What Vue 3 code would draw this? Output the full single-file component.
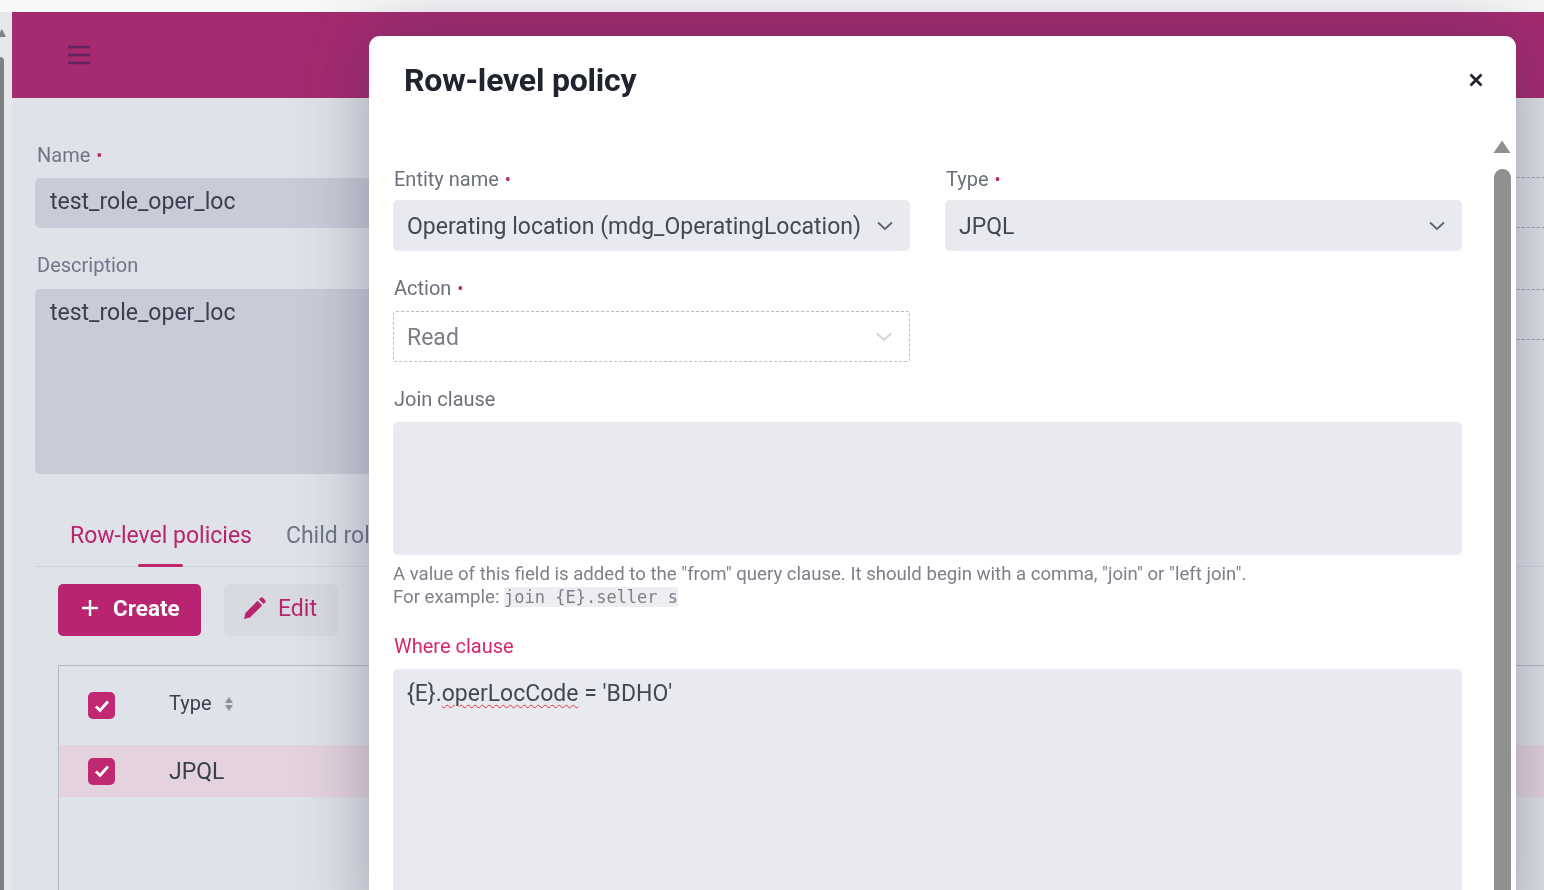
<script setup>
const rows = ['JPQL']
</script>

<template>
  <div class="screen">
    <div class="topstrip"></div>
    <div class="body">
      <aside class="pagescroll">
        <svg class="up" width="8" height="10" viewBox="0 0 8 10"><path d="M-3 9 L2 1 L6 9 Z" fill="#808285" /></svg>
        <div class="pagethumb"></div>
      </aside>
      <main class="page">
        <header class="bar">
          <svg width="24" height="20" viewBox="0 0 24 20" fill="none" stroke="#632463" stroke-width="2.5">
            <path d="M1 2H23M1 10H23M1 18H23" />
          </svg>
        </header>
        <div class="content">
          <div class="form">
            <div class="col">
              <label class="blabel">Name <i class="req">•</i></label>
              <div class="binput">test_role_oper_loc</div>
              <label class="blabel second">Description</label>
              <div class="binput area">test_role_oper_loc</div>
            </div>
            <div class="col right">
              <div class="dash"></div>
              <div class="dash d2"></div>
            </div>
          </div>
          <nav class="tabs">
            <span class="tab active">Row-level policies<b class="ink"></b></span>
            <span class="tab">Child roles</span>
          </nav>
          <div class="actions">
            <button class="btn primary">
              <svg width="18" height="18" viewBox="0 0 18 18" stroke="#fff" stroke-width="2.4"><path d="M9 1V17M1 9H17" /></svg>
              Create
            </button>
            <button class="btn ghost">
              <svg width="24" height="24" viewBox="0 0 24 24" fill="#b8246f"><path d="M2 23l1.400-6L15.600 4.800l4.600 4.600L8 21.600zM17 3.400l1.600-1.600a1.600 1.600 0 0 1 2.200 0l2.400 2.400a1.600 1.600 0 0 1 0 2.200L21.600 8z" /></svg>
              Edit
            </button>
          </div>
          <div class="table">
            <div class="thead">
              <span class="check"><svg width="18" height="14" viewBox="0 0 18 14" fill="none" stroke="#fff" stroke-width="2.8"><path d="M3 7.500l4 4 8-9" /></svg></span>
              <span class="th">Type</span>
              <svg class="sort" width="10" height="16" viewBox="0 0 10 16" fill="#8e919c"><path d="M5 1l4 6H1zM5 15l4-6H1z" /></svg>
            </div>
            <div v-for="r in rows" :key="r" class="trow">
              <span class="check"><svg width="18" height="14" viewBox="0 0 18 14" fill="none" stroke="#fff" stroke-width="2.8"><path d="M3 7.500l4 4 8-9" /></svg></span>
              <span class="td">{{ r }}</span>
            </div>
          </div>
        </div>
      </main>
    </div>

    <section class="modal">
      <header class="mhead">
        <h2>Row-level policy</h2>
        <svg width="14" height="14" viewBox="0 0 14 14" stroke="#1f2430" stroke-width="2.8"><path d="M1.500 1.500L12.500 12.500M12.500 1.500L1.500 12.500" /></svg>
      </header>
      <div class="mbody">
        <div class="mform">
          <div class="grid">
            <div class="field">
              <label>Entity name <i class="req">•</i></label>
              <div class="select">
                <span>Operating location (mdg_OperatingLocation)</span>
                <svg width="18" height="10" viewBox="0 0 18 10" fill="none" stroke="#5e6370" stroke-width="1.8"><path d="M2 1.500l7 6.500 7-6.500" /></svg>
              </div>
            </div>
            <div class="field">
              <label>Type <i class="req">•</i></label>
              <div class="select">
                <span>JPQL</span>
                <svg width="18" height="10" viewBox="0 0 18 10" fill="none" stroke="#5e6370" stroke-width="1.8"><path d="M2 1.500l7 6.500 7-6.500" /></svg>
              </div>
            </div>
            <div class="field">
              <label>Action <i class="req">•</i></label>
              <div class="select disabled">
                <span>Read</span>
                <svg width="18" height="10" viewBox="0 0 18 10" fill="none" stroke="#d0d2d7" stroke-width="1.8"><path d="M2 1.500l7 6.500 7-6.500" /></svg>
              </div>
            </div>
          </div>
          <div class="field wide">
            <label>Join clause</label>
            <div class="textarea join"></div>
            <p class="help">A value of this field is added to the "from" query clause. It should begin with a comma, "join" or "left join".<br />For example: <code>join {E}.seller s</code></p>
          </div>
          <div class="field wide where">
            <label class="err">Where clause</label>
            <div class="textarea code">{E}.<span class="wavy">operLocCode</span> = 'BDHO'</div>
          </div>
        </div>
        <div class="mscroll">
          <svg width="18" height="13" viewBox="0 0 18 13"><path d="M9 0.500L17.500 13H0.500Z" fill="#8f8f8f" /></svg>
          <div class="mthumb"></div>
        </div>
      </div>
    </section>
  </div>
</template>

<style>
html, body { margin: 0; height: 890px; overflow: hidden; background: #fff; }
</style>

<style scoped>
.screen {
  position: relative;
  width: 1544px;
  height: 890px;
  overflow: hidden;
  font-family: Roboto, "Liberation Sans", sans-serif;
  display: flex;
  flex-direction: column;
  background: #e0e2e9;
  filter: blur(0.4px);
}
.topstrip { height: 12px; flex: none; background: #f8f8f9; }
.body { flex: 1; display: flex; min-height: 0; }
.pagescroll {
  width: 12px;
  flex: none;
  background: #e6e7ea;
  display: flex;
  flex-direction: column;
  gap: 19px;
  padding-top: 16px;
  box-sizing: border-box;
}
.up { display: block; }
.pagethumb { width: 4px; flex: 1; background: #808184; border-radius: 0 4px 0 0; }
.page { flex: 1; min-width: 0; overflow: hidden; display: flex; flex-direction: column; }
.bar {
  height: 86px;
  flex: none;
  background: #a52a6f;
  display: flex;
  align-items: center;
  padding-left: 55px;
  box-sizing: border-box;
}
.content { padding: 45px 0 0 23px; flex: 1; min-height: 0; }
.form { display: flex; gap: 40px; }
.col { width: 780px; flex: none; }
.right { padding-top: 34px; }
.blabel { display: block; font-size: 20px; line-height: 24px; color: #6f7689; padding-left: 2px; }
.second { margin-top: 25px; }
.req { font-style: normal; color: #c2246f; font-size: 18px; margin-left: 1px; line-height: 1; }
.binput {
  margin-top: 11px;
  height: 50px;
  line-height: 48px;
  padding-left: 15px;
  background: #c9ccd8;
  border-radius: 5px;
  font-size: 23px;
  color: #3a3f4d;
}
.area { height: 185px; margin-top: 12px; }
.dash { height: 51px; width: 800px; box-sizing: border-box; border: 1px dashed #9b9eab; }
.d2 { margin-top: 61px; }
.tabs {
  margin-top: 34px;
  height: 58px;
  border-bottom: 1px solid #d2d4dd;
  display: flex;
  gap: 34px;
  padding-left: 35px;
  width: 1600px;
  font-size: 23px;
  line-height: 56px;
  color: #6f7689;
}
.tab { position: relative; }
.tab.active { color: #b8246f; }
.ink {
  position: absolute;
  left: 68px;
  bottom: -1px;
  width: 45px;
  height: 3px;
  border-radius: 2px;
  background: #c2246f;
}
.actions { display: flex; gap: 23px; margin-top: 17px; padding-left: 23px; }
.btn {
  height: 52px;
  border: 0;
  border-radius: 5px;
  display: flex;
  align-items: center;
  font: inherit;
  font-size: 23px;
  box-sizing: border-box;
}
.primary { width: 143px; background: #b8246f; color: #fff; font-weight: 700; font-size: 22.5px; gap: 14px; padding: 0 0 4px 23px; }
.ghost { width: 114px; background: #d8dae2; color: #b8246f; gap: 12px; padding: 0 0 4px 18px; }
.table {
  margin: 29px 0 0 23px;
  width: 1600px;
  height: 300px;
  border-top: 1px solid #b5b8c4;
  border-left: 1px solid #b5b8c4;
}
.thead { height: 79px; display: flex; align-items: center; padding-left: 29px; }
.trow { height: 52px; display: flex; align-items: center; padding-left: 29px; background: #e4d3de; }
.check {
  width: 27px;
  height: 27px;
  flex: none;
  border-radius: 5px;
  background: #c02872;
  display: flex;
  align-items: center;
  justify-content: center;
}
.th { margin: -5px 0 0 54px; font-size: 20px; color: #3a3f4d; }
.sort { margin-left: 12px; margin-top: -4px; }
.td { margin-left: 54px; font-size: 23px; color: #3a3f4d; }

.modal {
  position: absolute;
  left: 369px;
  top: 36px;
  width: 1147px;
  height: 900px;
  background: #fff;
  border-radius: 11px 11px 0 0;
  box-shadow: 0 0 70px rgba(48, 52, 78, 0.38);
  display: flex;
  flex-direction: column;
}
.mhead {
  height: 86px;
  flex: none;
  display: flex;
  align-items: center;
  justify-content: space-between;
  padding: 1px 33px 0 35px;
  box-sizing: border-box;
}
h2 { margin: 0; font-size: 32px; font-weight: 700; color: #20242f; letter-spacing: -0.2px; }
.mbody { display: flex; flex: 1; min-height: 0; padding: 18px 5px 0 24px; }
.mform { width: 1069px; flex: none; padding-top: 21px; }
.grid { display: grid; grid-template-columns: 517px 517px; column-gap: 35px; row-gap: 19px; }
.field label { display: block; font-size: 20px; line-height: 36px; height: 36px; color: #6c707c; padding-left: 1px; }
.select {
  margin-top: 3px;
  height: 51px;
  box-sizing: border-box;
  border-radius: 5px;
  background: #e9eaef;
  display: flex;
  align-items: center;
  justify-content: space-between;
  padding: 1px 16px 0 14px;
  font-size: 23px;
  color: #434854;
  white-space: nowrap;
}
.disabled { background: #fff; border: 1.5px dashed #bcbec6; color: #7a7d86; margin-top: 5px; padding-left: 13px; border-radius: 3px; }
.wide { margin-top: 19px; }
.textarea {
  margin-top: 5px;
  border-radius: 5px;
  background: #e9eaef;
  box-sizing: border-box;
  padding: 11px 14px;
  font-size: 23px;
  color: #434854;
}
.join { height: 133px; }
.help { margin: 8px 0 0; font-size: 18.6px; line-height: 23px; color: #7d808a; white-space: nowrap; }
code { font-family: "DejaVu Sans Mono", monospace; font-size: 17px; line-height: 1; background: #eeeef2; color: #7d808a; }
.where { margin-top: 19px; }
.err { color: #d8266f !important; }
.code { height: 400px; }
.wavy { text-decoration: underline wavy #e0303f 1px; text-underline-offset: 3px; }
.mscroll {
  width: 18px;
  margin-left: 31px;
  display: flex;
  flex-direction: column;
  align-items: center;
  gap: 16px;
}
.mscroll svg { display: block; }
.mthumb { width: 17px; flex: 1; background: #8f8f8f; border-radius: 9px 9px 0 0; }
</style>
